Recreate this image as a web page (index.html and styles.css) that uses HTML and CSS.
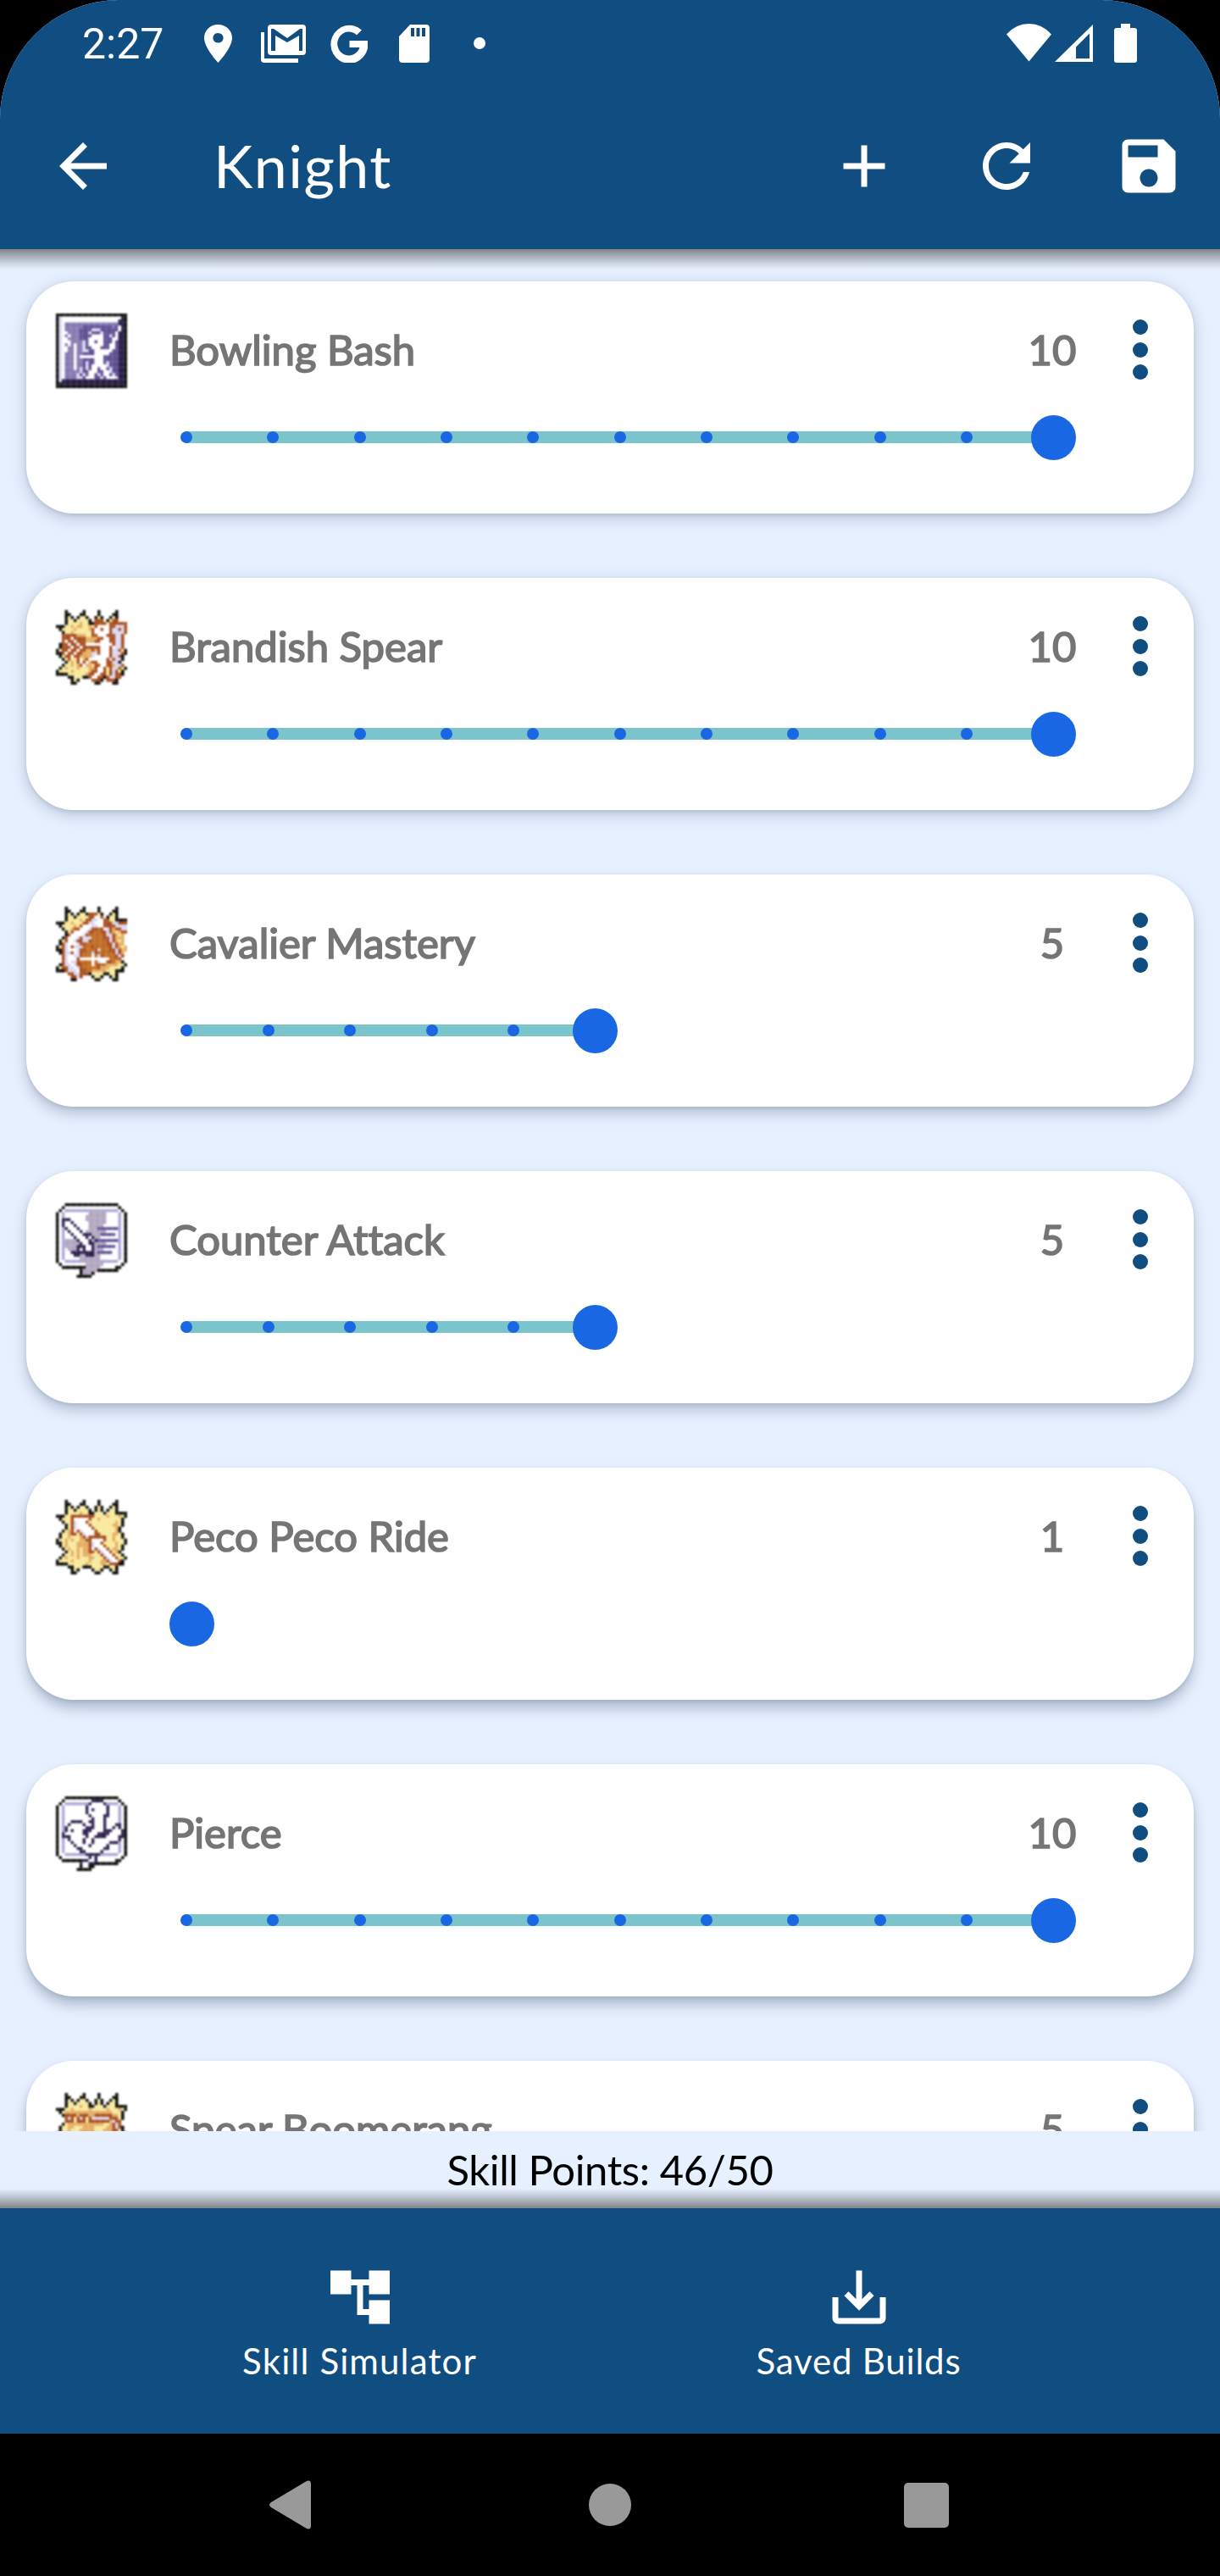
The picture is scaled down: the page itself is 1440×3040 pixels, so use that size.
FILE: index.html
```html
<!DOCTYPE html>
<html lang="en">
<head>
<meta charset="utf-8">
<title>Knight</title>
<link rel="stylesheet" href="styles.css">
</head>
<body>
<div class="screen">
  <header class="app-header">
    <div class="status-bar">
      <span class="clock">2:27</span>
      <div class="notifications">
        <span><svg width="33" height="45" viewBox="5 2 14 20" preserveAspectRatio="none"><path d="M12 2C8.13 2 5 5.13 5 9c0 5.25 7 13 7 13s7-7.75 7-13c0-3.87-3.13-7-7-7zm0 9.6a2.6 2.6 0 1 1 0-5.2 2.6 2.6 0 0 1 0 5.2z"/></svg></span>
        <span><svg width="53" height="45" viewBox="0 0 53 45"><path d="M0 9h4v31h40v5H4q-4 0-4-4z"/><path fill-rule="evenodd" d="M12 0h37q4 0 4 4v28q0 4-4 4H12q-4 0-4-4V4q0-4 4-4zm0 5v26h5V13l14 8 14-8v18h4V5h-3L31 16 15 5z"/></svg></span>
        <span><svg width="44" height="45" viewBox="0 0 44 45"><path d="M37 6.5A22 22.5 0 1 0 44 19H22.500v8H34.500A13.500 14 0 1 1 31 12.300z"/></svg></span>
        <span><svg width="36" height="45" viewBox="0 0 36 45"><path fill-rule="evenodd" d="M13 0h19q4 0 4 4v37q0 4-4 4H4q-4 0-4-4V14zm1 4v10h4V4zm6.500 0v10h4V4zm6.500 0v10h4V4z"/></svg></span>
        <span><svg width="14" height="14" viewBox="0 0 14 14"><circle cx="7" cy="7" r="7"/></svg></span>
      </div>
      <div class="signals">
        <svg width="53" height="45" viewBox="0 0 53 45"><path d="M0 12.500Q11 0 26.500 0T53 12.500L26.500 44.500z"/></svg>
        <svg width="45" height="45" viewBox="0 0 45 45"><path fill-rule="evenodd" d="M45 1v44H0zM41 11.500L25 27.500V41h16z"/></svg>
        <svg class="battery" width="27" height="46" viewBox="0 0 27 46"><path d="M8 0h11v5h5q3 0 3 3v35q0 3-3 3H3q-3 0-3-3V8q0-3 3-3h5z"/></svg>
      </div>
    </div>
    <div class="toolbar">
      <div class="back"><svg class="icon" viewBox="0 0 24 24"><path d="M20 11H7.830l5.590-5.590L12 4l-8 8 8 8 1.410-1.410L7.830 13H20v-2z"/></svg></div>
      <h1 class="title">Knight</h1>
      <div class="action"><svg class="icon" viewBox="0 0 24 24"><path d="M19 13h-6v6h-2v-6H5v-2h6V5h2v6h6v2z"/></svg></div>
      <div class="action"><svg class="icon" viewBox="0 0 24 24"><path d="M17.650 6.350C16.200 4.900 14.210 4 12 4c-4.420 0-7.990 3.580-7.990 8s3.570 8 7.990 8c3.730 0 6.840-2.550 7.730-6h-2.080c-.820 2.330-3.040 4-5.650 4-3.310 0-6-2.690-6-6s2.690-6 6-6c1.660 0 3.140.690 4.220 1.780L13 11h7V4l-2.350 2.350z"/></svg></div>
      <div class="action"><svg class="icon" viewBox="0 0 24 24"><path d="M17 3H5c-1.110 0-2 .900-2 2v14c0 1.100.890 2 2 2h14c1.100 0 2-.900 2-2V7l-4-4zm-5 16c-1.660 0-3-1.340-3-3s1.340-3 3-3 3 1.340 3 3-1.340 3-3 3zm3-10H5V5h10v4z"/></svg></div>
    </div>
  </header>

  <main class="skills">
    <article class="card">
      <div class="sprite" data-sprite="bash"></div>
      <h2 class="name">Bowling Bash</h2><span class="level">10</span>
      <div class="menu"><i></i><i></i><i></i></div>
      <div class="slider"><div class="track track-10"><i></i><i></i><i></i><i></i><i></i><i></i><i></i><i></i><i></i><i></i></div><b class="thumb"></b></div>
    </article>
    <article class="card">
      <div class="sprite" data-sprite="brandish"></div>
      <h2 class="name">Brandish Spear</h2><span class="level">10</span>
      <div class="menu"><i></i><i></i><i></i></div>
      <div class="slider"><div class="track track-10"><i></i><i></i><i></i><i></i><i></i><i></i><i></i><i></i><i></i><i></i></div><b class="thumb"></b></div>
    </article>
    <article class="card">
      <div class="sprite" data-sprite="cavalier"></div>
      <h2 class="name">Cavalier Mastery</h2><span class="level">5</span>
      <div class="menu"><i></i><i></i><i></i></div>
      <div class="slider"><div class="track track-5"><i></i><i></i><i></i><i></i><i></i></div><b class="thumb"></b></div>
    </article>
    <article class="card">
      <div class="sprite" data-sprite="counter"></div>
      <h2 class="name">Counter Attack</h2><span class="level">5</span>
      <div class="menu"><i></i><i></i><i></i></div>
      <div class="slider"><div class="track track-5"><i></i><i></i><i></i><i></i><i></i></div><b class="thumb"></b></div>
    </article>
    <article class="card">
      <div class="sprite" data-sprite="peco"></div>
      <h2 class="name">Peco Peco Ride</h2><span class="level">1</span>
      <div class="menu"><i></i><i></i><i></i></div>
      <div class="slider"><div class="track track-1"></div><b class="thumb"></b></div>
    </article>
    <article class="card">
      <div class="sprite" data-sprite="pierce"></div>
      <h2 class="name">Pierce</h2><span class="level">10</span>
      <div class="menu"><i></i><i></i><i></i></div>
      <div class="slider"><div class="track track-10"><i></i><i></i><i></i><i></i><i></i><i></i><i></i><i></i><i></i><i></i></div><b class="thumb"></b></div>
    </article>
    <article class="card">
      <div class="sprite" data-sprite="boomerang"></div>
      <h2 class="name">Spear Boomerang</h2><span class="level">5</span>
      <div class="menu"><i></i><i></i><i></i></div>
      <div class="slider"><div class="track track-5"><i></i><i></i><i></i><i></i><i></i></div><b class="thumb"></b></div>
    </article>
  </main>

  <div class="points">Skill Points: 46/50</div>

  <nav class="tabs">
    <div class="tab"><svg class="icon" viewBox="0 0 24 24"><path d="M22 11V3h-7v3H9V3H2v8h7V8h2v10h4v3h7v-8h-7v3h-2V8h2v3h7z"/></svg><span>Skill Simulator</span></div>
    <div class="tab"><svg class="icon" viewBox="0 0 24 24"><path d="M19 12v7H5v-7H3v7c0 1.100.900 2 2 2h14c1.100 0 2-.900 2-2v-7h-2zm-6 .670l2.590-2.580L17 11.500l-5 5-5-5 1.410-1.410L11 12.670V3h2z"/></svg><span class="tight">Saved Builds</span></div>
  </nav>
</div>
<footer class="system-nav">
  <svg width="55" height="58" viewBox="0 0 55 58"><path d="M2 26L43 1.500q6-3 6 3v49q0 6-6 3L2 32q-4-3 0-6z"/></svg>
  <svg width="50" height="50" viewBox="0 0 50 50"><circle cx="25" cy="25" r="25"/></svg>
  <svg width="53" height="53" viewBox="0 0 53 53"><rect width="53" height="53" rx="5"/></svg>
</footer>
<script src="sprites.js"></script>
</body>
</html>
```
FILE: styles.css
```css
* { box-sizing: border-box; margin: 0; padding: 0; }
body { width: 1440px; height: 3040px; overflow: hidden; background: #000; font-family: Lato, "Open Sans", sans-serif; font-variant-ligatures: none; }
svg { display: block; fill: #fff; }
.icon { width: 84px; height: 84px; }

.screen { display: flex; flex-direction: column; height: 2872px; border-radius: 140px 140px 0 0; overflow: hidden; background: #e7f0ff; }

.app-header { position: relative; z-index: 1; flex: none; height: 294px; background: #104d81; color: #fff; }
.app-header::after { content: ""; position: absolute; left: 0; right: 0; top: 100%; height: 24px; background: linear-gradient(#808488, #a4abb6 33%, #c9d1de 66%, rgba(231, 240, 255, 0)); }
.status-bar { display: flex; align-items: center; height: 98px; padding: 4px 98px 0 97px; }
.clock { width: 122px; padding-top: 2px; font: 50px/58px Roboto, sans-serif; }
.notifications { display: flex; }
.notifications span { display: flex; justify-content: center; align-items: center; width: 77px; }
.signals { display: flex; gap: 4px; margin-left: auto; }
.battery { margin-left: 21px; }
.toolbar { display: flex; align-items: center; height: 196px; }
.back { width: 252px; padding-left: 56px; }
.title { flex: 1; padding-bottom: 2px; font-weight: 400; font-size: 70px; line-height: 84px; letter-spacing: 1.4px; }
.action { display: flex; justify-content: center; width: 168px; }

.skills { display: flex; flex-direction: column; gap: 76px; height: 2221px; flex: none; padding: 38px 31px 0; overflow: hidden; }
.card { display: grid; grid-template-columns: 134px 1002px 80px 127px; grid-template-rows: 160px 49px; align-items: center; flex: none; height: 274px; padding-left: 35px; border-radius: 56px; background: #fff; box-shadow: 0 5px 18px rgba(30, 50, 80, 0.24), 0 2px 4px rgba(30, 50, 80, 0.1); }
.card:nth-child(n+3) { box-shadow: 0 8px 16px rgba(30, 50, 80, 0.25), 0 2px 4px rgba(30, 50, 80, 0.1); }
.card:nth-child(n+5) { box-shadow: 0 10px 15px rgba(30, 50, 80, 0.28), 0 2px 4px rgba(30, 50, 80, 0.1); }
.sprite { padding-top: 4px; }
.sprite svg { width: 84px; height: 88px; filter: blur(0.8px); }
.name, .level { color: #757575; font-weight: 400; font-size: 49px; line-height: 58px; -webkit-text-stroke: 1.7px #757575; }
.level { text-align: center; }
.menu { display: flex; flex-direction: column; align-items: center; gap: 8.4px; padding-top: 1px; }
.menu i { width: 18px; height: 18px; border-radius: 50%; background: #104d81; }
.slider { grid-column: 2 / span 3; display: flex; align-items: center; padding-left: 20px; margin-top: -1px; }
.track { display: flex; height: 14px; background: #7bc4cc; }
.track i { flex: 1; }
.track i::before { content: ""; display: block; width: 14px; height: 14px; margin-left: -7px; border-radius: 50%; background: #1967e2; }
.track-10 { width: 1023.5px; }
.track-5 { width: 482.5px; }
.track-1 { width: 6px; }
.thumb { width: 53px; height: 53px; margin-left: -26.5px; border-radius: 50%; background: #1967e2; }

.points { position: relative; flex: none; height: 91px; padding-top: 16px; text-align: center; font-size: 49px; line-height: 58px; letter-spacing: -0.4px; color: #000; }
.points::after { content: ""; position: absolute; left: 0; right: 0; bottom: 0; height: 23px; background: linear-gradient(rgba(231, 240, 255, 0), #c4ccd9 35%, #a2a9b4 68%, #808488); }

.tabs { display: flex; height: 266px; padding: 63px 132px 0 130px; background: #104d81; color: #fff; }
.tab { flex: 1; display: flex; flex-direction: column; align-items: center; font-size: 42px; line-height: 50px; letter-spacing: 1.15px; }
.tab span { margin-top: 8px; }
.tab .tight { letter-spacing: 0.8px; }

.system-nav { display: flex; justify-content: space-between; align-items: center; height: 168px; padding: 0 320px 0 318px; }
.system-nav svg { fill: #999; }
```
FILE: sprites.js
```js
// Skill sprites as 24x25 character maps; '-' in a layer keeps the base pixel.
const colors = {
  k: '#0a0a08', w: '#ffffff', l: '#dcd8f4', v: '#aaa4d6', p: '#8478b0', d: '#5c4d90',
  n: '#2a1d4a', g: '#b1a6c0', y: '#f7e99c', t: '#e5ac60', o: '#a5491a', q: '#bf6820'
};

const burst = [
  '...k.....k....k.....k...', '...kk...kk....k....kk...', '...kyk.kyyk..kyk..kyk...',
  '...kyykyyyyk.kyk.kyyk...', '...kyyyytyykkyyykyyykkkk', 'kkkyytyyyyytyyyyytyyytyk',
  '.kyyyytyyyytyytyyyyyyyk.', '..kyytyyyyyyyyyyyyyytyk.', '...kyytyyyyyyyyyyyyttyk.',
  '...kytyyyyyyyyyyyyyytk..', '..kytyyyyttyyyyyyyyytk..', '.kyyttyyyttttyyyyyyttyk.',
  '.kyytyyytttttyyyyyytyyk.', 'kyytytyytttttyyyyyytyyyk', 'kkytyyytttttttyyyyyytyyk',
  '.kytyyytttttttyyyyyytyk.', '..kytyytytttttyyyyyttyk.', '...kytytytttyyyyyyyytk..',
  '..kyytytytttyyyyyyytyyk.', '.kytyyytyyyttyyyyyttyyyk.', 'kyyyytyyyyytyyyttyyyyyk.',
  'kkkkyyyyyytyyyyttyyykkk.', '....kkyyykkkyyyykkyyk...', '.....kyk....kyyk..kyk...',
  '.....kk......kk....kk...'
];

const bubbleSide = 'kwv' + 'w'.repeat(18) + 'vwk';
const bubble = [
  '...kkkkkkkkkkkkkkkkkk...', '..kwwwwwwwwwwwwwwwwwwk..', '.kwvvvvvvvvvvvvvvvvvvwk.',
  ...Array(16).fill(bubbleSide),
  'kwwvvvvvvvvvvvvvvvvvvwwk', '.kwwwwwwwwwwwwwwwwwwwwk.', '..kkkkkkkkwwwwwwwwwwkk..',
  '........kwwwwkkkkkkkk...', '........kwwkk...........', '.......kkkkk............'
];

const bashField = [
  'ppppppddddddddddpdwnk', 'pppppddddlllddddddwnk', 'wppppdddldddlddddwnnk', 'pwpppddddwwwwddldwnnk',
  'wppppdddwwwwwdddwwnnk', 'wwppppldwwdwwdddwdnnk', 'pwpwppldwwwwwddwwdnnk', 'wppwpplddwwwdddwwdnnk',
  'wppwpplldd' + 'wwwwwwddnnk', 'pppwppddddwwwwwdddnnk', 'pppwpwwwwwwwwdddddnnk', 'pppwppddddwwwdddddnnk',
  'pppwppdlddwwwdldddnnk', 'pppwppdldwwwwwldddnnk', 'pppwpldldwwdwwdlddnnk', 'ppppplddwwwddwwlddnnk',
  'ppppldldwwdldwwdldnnk', 'pppplldwwwddldwwwlnnk'
];
const bash = [
  'k'.repeat(24), 'kl' + 'w'.repeat(20) + 'nk', 'kl' + 'w'.repeat(19) + 'nnk', 'klw' + 'p'.repeat(18) + 'nnk',
  ...bashField.map(row => 'klw' + row),
  'kl' + 'n'.repeat(21) + 'k', 'k' + 'n'.repeat(22) + 'k', 'k'.repeat(24)
];

const brandish = [
  '', '', '', '-------------ooo---oo', '-------------oooo-oooooo', '-----t-tt----owwwwoolllo',
  '------t-----owwowwollolo', '------------owwwwwollllo', '--ooooottt--oowwwooollo', '--ooowoooottttoowwoollo',
  '--owoowoootttoowwwoollo', '--oowoowoowwwwwwwwwollo', '--ooowoowoooooowwwowllo', '--oowoowoottotowwwollo',
  '--owoowootttllowwwolllo', '---oowoottttlwwwwwollo', '----o--ow-owwwwwwololl', '-------owow-oowwwooll',
  '--------ow---oowwootllo', '-------------owwo-ollo', '------------oowwo-olo', '-----------oowwoo-oloo',
  '-----------owwoo-olloo', '------------ooo--ooo'
];

const cavalier = [
  '', '', '-----------ooo', '-----------oowwo', '----------oollwwoo', '---------oollwwwooollooo',
  '--------owwwllwwoooollll', '------oowwwlooqowlotooll', '-----owwwwlooqqoolotytoo', '----owwwwloqqqqqollotyt',
  '---owwwlolllqqqqoolottt', '---owwloolloqqqqqolotyt', '--olwwwlooqqqqqqqoolott', '--olwolllqqqoqqqqqolotyt',
  '--olwwwlooqqqolqqqoolott', '--ollowloqqqloqqqqqolot', '--olwwlloqqqwqloqqqqolo', '--olwwwowwwwwwwwwwqqqo',
  '--olwlloqqqqwqlwwooqtt', '--ollwlooqqqwqoqqtttt', '--oollwloqqqqqottt', '---olllwooqqttt', '----oollooo', '-----oolo'
];

const counter = [
  '', '', '------------gggg', '-----------gggggg', '----------ggggggg', '--nnn-----ggggggg',
  '--nwwn-----gggggg', '--nwwwn----ggggg', '---nwwwn---gggddddddd', '----nwwwn-ggggggg', '-----nwwwnnngggddddd',
  '------nwwwnwngg', '---ggggnwwwngnddddddd', '---gggggnwwnngggg', '---ggggnnnwwngdddddd', '----gggnwnwwnggg',
  '-----nnnnnnnngddddd', '------nnggnnngg', '--------ggggggg', '---------gggggg', '----------gggggg',
  '----------ggggg', '---------ggggg', '---------ggg'
];

const peco = [
  '', '', '', '', '', '-----oooooooo', '-----owwwwwo', '-----olwwwo', '-----olwwwwo', '-----olwwwwwo',
  '-----owolwwwwo', '-----oo-olwwwoo', '---------oloooooo', '----------oowwwwo', '-----------olwwo',
  '-----------olwwwo', '-----------owolwwo', '-----------oo-olwwo', '---------------olwwo',
  '----------------olwwo', '-----------------olwwo', '------------------ooo'
];

const pierce = [
  '', '------------nnnn', '-----------nwwwwn', '----------nwwwwwwn', '----------nwnwwwwn', '----------nwwwwwwn',
  '-----------nwwwwnn', '------------nwwwn', '-----nnnn--nnwwwn', '----nwwwwn--nwwwn---nn', '---nwwwwwwnnnwwwn--nwn',
  '---nwnwwwnnnwwwwnnnwwwn', '--nwwwwwwnnwwwnnnnwwwwn', '--nnnwwwwwnwwnnnnwwwwnn', '----nwwwwnwwnwwwwwwwwn',
  '-----nwwwnwwnwwwwwnnn', '------nwwwwnwwwwwn', '-------nnwwwwwwwnn', '--------nnwwwwwn', '----------nnnnn',
  '-----------nwn', '---------nnwwn', '--------nwwnn'
];

const boomerang = [
  '', '', '', '', '', '', '---tttttttttttttttt', '---ooootooottoooooott', '---oloyoloyollllllooo',
  '---oooyoooyoooooootloo', '----tttttttttttt--tolo', '-----------------ttolo', '----------------tttoo'
];

const sprites = {
  bash: [bash], brandish: [burst, brandish], cavalier: [burst, cavalier], counter: [bubble, counter],
  peco: [burst, peco], pierce: [bubble, pierce], boomerang: [burst, boomerang]
};

document.querySelectorAll('.sprite').forEach(box => {
  const [base, layer = []] = sprites[box.dataset.sprite];
  let cells = '';
  base.forEach((row, y) => {
    [...row].forEach((cell, x) => {
      const over = (layer[y] || '')[x];
      const key = over && over !== '-' ? over : cell;
      if (colors[key]) cells += `<rect x="${x}" y="${y}" width="1.03" height="1.03" fill="${colors[key]}"/>`;
    });
  });
  box.innerHTML = `<svg viewBox="0 0 24 25" preserveAspectRatio="none">${cells}</svg>`;
});
```
